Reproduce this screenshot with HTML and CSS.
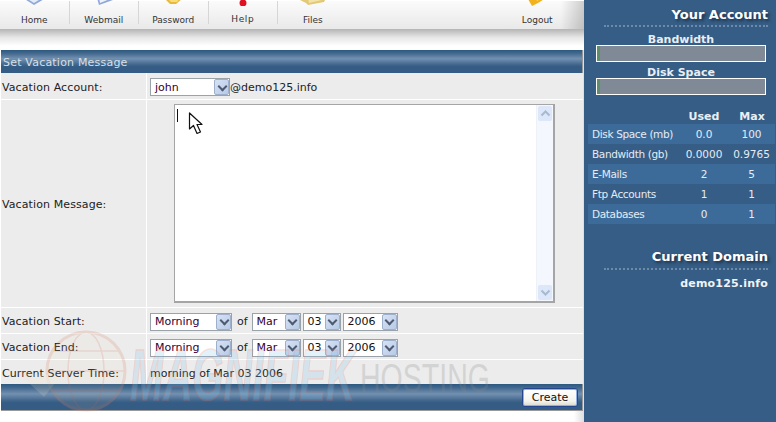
FILE: index.html
```html
<!DOCTYPE html>
<html lang="en">
<head>
    <meta charset="UTF-8">
    <meta name="viewport" content="width=device-width, initial-scale=1.0">
    <title>Set Vacation Message</title>
    <link rel="stylesheet" href="styles.css">
</head>
<body>
    <div class="main">
        <div class="nav">
            <div class="nav-item">
                <svg class="nav-icon" width="30" height="8" viewBox="0 0 30 8"><path d="M4 0 L15 7 L27 0 Z" fill="#8fa8d8"/><path d="M7 0 L15 5 L23 0 Z" fill="#e4ecf8"/></svg>
                <span>Home</span>
            </div>
            <div class="nav-item">
                <svg class="nav-icon" width="30" height="8" viewBox="0 0 30 8"><path d="M8 0 L10 7 L24 2 L24 0 Z" fill="#8fa8d8"/><path d="M10 0 L11 5 L21 1 L21 0 Z" fill="#eef2fa"/></svg>
                <span>Webmail</span>
            </div>
            <div class="nav-item">
                <svg class="nav-icon" width="30" height="8" viewBox="0 0 30 8"><path d="M6 0 L12 6 L18 6 L25 0 Z" fill="#e8b93a"/><path d="M9 0 L13 4 L19 4 L22 0 Z" fill="#f8dd78"/></svg>
                <span>Password</span>
            </div>
            <div class="nav-item">
                <svg class="nav-icon" width="30" height="8" viewBox="0 0 30 8"><circle cx="15" cy="5" r="3.5" fill="#e01020"/></svg>
                <span class="spaced">Help</span>
            </div>
            <div class="nav-item nav-files">
                <svg class="nav-icon" width="30" height="8" viewBox="0 0 30 8"><path d="M2 2 L8 5 L10 7 L26 4 L28 0 L4 0 Z" fill="#e2c877"/><path d="M10 0 L11 5 L24 2 L24 0 Z" fill="#f3e3a6"/></svg>
                <span>Files</span>
            </div>
            <div class="nav-item nav-logout">
                <svg class="nav-icon" width="30" height="8" viewBox="0 0 30 8"><path d="M6 1 L10 8 L16 5 L24 0 L6 0 Z" fill="#f2b21e"/><path d="M14 0 L15 3 L20 0 Z" fill="#fbe07a"/></svg>
                <span>Logout</span>
            </div>
        </div>
        <div class="nav-shadow"></div>

        <div class="panel">
            <div class="bar bar-title">Set Vacation Message</div>

            <div class="row row-account">
                <div class="label">Vacation Account:</div>
                <div class="field">
                    <div class="select select-account"><span>john</span><i class="arrow"></i></div>
                    <span class="domain">@demo125.info</span>
                </div>
            </div>

            <div class="row row-message">
                <div class="label">Vacation Message:</div>
                <div class="field field-message">
                    <div class="textarea">
                        <div class="text-area"><div class="caret"></div></div>
                        <div class="scrollbar">
                            <div class="scroll-btn"><svg width="11" height="7" viewBox="0 0 11 7"><path d="M1.5 5.5 L5.5 1.5 L9.5 5.5" fill="none" stroke="#a9b9cf" stroke-width="2"/></svg></div>
                            <div class="scroll-btn"><svg width="11" height="7" viewBox="0 0 11 7"><path d="M1.5 1.5 L5.5 5.5 L9.5 1.5" fill="none" stroke="#a9b9cf" stroke-width="2"/></svg></div>
                        </div>
                    </div>
                </div>
            </div>

            <div class="row row-date">
                <div class="label">Vacation Start:</div>
                <div class="field">
                    <div class="select select-time"><span>Morning</span><i class="arrow"></i></div>
                    <span class="of">of</span>
                    <div class="select select-month"><span>Mar</span><i class="arrow"></i></div>
                    <div class="select select-day"><span>03</span><i class="arrow"></i></div>
                    <div class="select select-year"><span>2006</span><i class="arrow"></i></div>
                </div>
            </div>

            <div class="row row-date">
                <div class="label">Vacation End:</div>
                <div class="field">
                    <div class="select select-time"><span>Morning</span><i class="arrow"></i></div>
                    <span class="of">of</span>
                    <div class="select select-month"><span>Mar</span><i class="arrow"></i></div>
                    <div class="select select-day"><span>03</span><i class="arrow"></i></div>
                    <div class="select select-year"><span>2006</span><i class="arrow"></i></div>
                </div>
            </div>

            <div class="row row-time">
                <div class="label">Current Server Time:</div>
                <div class="field">morning of Mar 03 2006</div>
            </div>

            <div class="bar bar-foot">
                <div class="btn">Create</div>
            </div>
        </div>

        <svg class="watermark" width="500" height="80" viewBox="0 0 500 80">
            <circle cx="86" cy="38" r="39" fill="#f6d9c0" fill-opacity="0.4" stroke="#d98a70" stroke-width="3"/>
            <ellipse cx="86" cy="38" rx="18" ry="39" fill="none" stroke="#d98a70" stroke-width="1.5"/>
            <path d="M47 38 H125 M53 18 H119 M53 58 H119" fill="none" stroke="#d98a70" stroke-width="1.5"/>
            <path d="M16 38 L60 44 L44 64 Z" fill="#f3e3c0" fill-opacity="0.7"/>
            <text x="130" y="67" class="wm-big" textLength="225" lengthAdjust="spacingAndGlyphs">MAGNIFIEK</text>
            <text x="360" y="59" class="wm-small" textLength="130" lengthAdjust="spacingAndGlyphs">HOSTING</text>
        </svg>

        <svg class="pointer" width="16" height="24" viewBox="0 0 16 24">
            <path d="M1.5 1 L1.5 17 L5.5 13.5 L9 21.5 L12.5 20 L9 12.5 L14 12.5 Z" fill="#fff" stroke="#111" stroke-width="1.2" stroke-linejoin="round"/>
        </svg>
    </div>

    <div class="side">
        <div class="side-title">Your Account</div>
        <div class="side-rule"></div>
        <div class="meter-label">Bandwidth</div>
        <div class="meter"><div class="meter-fill"></div></div>
        <div class="meter-label">Disk Space</div>
        <div class="meter"><div class="meter-fill"></div></div>

        <div class="stats-head"><span>Used</span><span>Max</span></div>
        <div class="stats">
            <div class="stat"><span>Disk Space (mb)</span><span>0.0</span><span>100</span></div>
            <div class="stat"><span>Bandwidth (gb)</span><span>0.0000</span><span>0.9765</span></div>
            <div class="stat"><span>E-Mails</span><span>2</span><span>5</span></div>
            <div class="stat"><span>Ftp Accounts</span><span>1</span><span>1</span></div>
            <div class="stat"><span>Databases</span><span>0</span><span>1</span></div>
        </div>

        <div class="side-title side-title-domain">Current Domain</div>
        <div class="side-rule"></div>
        <div class="side-domain">demo125.info</div>
    </div>
</body>
</html>
```

FILE: styles.css
```css
* {
    margin: 0;
    padding: 0;
    box-sizing: border-box;
}

body {
    font-family: 'DejaVu Sans', Verdana, sans-serif;
    font-size: 11px;
    color: #222;
    background: #fff;
    width: 776px;
    height: 422px;
    overflow: hidden;
    display: flex;
}

.main {
    width: 584px;
    position: relative;
    background: linear-gradient(90deg, #fff 0, #fff 574px, #ddd 584px);
}

/* top nav */
.nav {
    height: 29px;
    display: flex;
    background: linear-gradient(90deg, rgba(0,0,0,0) 96%, rgba(0,0,0,0.18) 100%), linear-gradient(180deg, #fbfbfb 0%, #e9e9e9 100%);
    border-top: 1px solid #fff;
}

.nav-item {
    width: 69.5px;
    height: 23px;
    display: flex;
    flex-direction: column;
    align-items: center;
    border-right: 1px solid #d6d6d6;
    font-size: 9px;
    color: #333;
}

.nav-item span {
    margin-top: 9px;
}

.nav-item .spaced {
    letter-spacing: 0.6px;
    margin-top: 8px;
}

.nav-icon {
    flex: none;
    height: 8px;
    margin-top: -3px;
}

.nav-files {
    border-right: 0;
}

.nav-logout {
    border-right: 0;
    margin-left: auto;
    margin-right: 12px;
}

.nav-shadow {
    height: 21px;
    background: linear-gradient(180deg, #b4b4b4 0%, #e6e6e6 40%, #fff 80%);
}

/* form panel */
.panel {
    margin: 0 1px 0 1px;
}

.bar {
    background: linear-gradient(180deg, #2c587f 0%, #44698f 15%, #7391b0 38%, #44698f 62%, #355c84 72%, #355c84 100%);
    border-right: 1px solid #999;
}

.bar-title {
    height: 23px;
    line-height: 25px;
    padding-left: 2px;
    color: #d5e0ea;
    font-size: 11px;
    letter-spacing: 0.2px;
}

.bar-foot {
    height: 27px;
    display: flex;
    justify-content: flex-end;
    align-items: center;
    padding-right: 4px;
    border-bottom: 1px solid #999;
}

.row {
    display: grid;
    grid-template-columns: 145px 1fr;
    column-gap: 1px;
    border-bottom: 1px solid #fff;
}

.row-account { height: 27px; }
.row-message { height: 208px; }
.row-date { height: 26px; }
.row-time { height: 24px; border-bottom: 0; }

.label,
.field {
    background: #ececec;
    display: flex;
    align-items: center;
    padding-top: 2px;
}

.label {
    padding-left: 1px;
    letter-spacing: 0.1px;
}

.field {
    padding-left: 3px;
}

.field-message {
    padding-left: 27px;
    padding-top: 0;
}

.domain {
    color: #222;
}

.of {
    margin: 0 4px 0 5px;
}

/* xp style select boxes */
.select {
    height: 18px;
    border: 1px solid #9aa2aa;
    background: #fff;
    display: flex;
    align-items: center;
    color: #303;
    padding-left: 4px;
    margin-right: 2px;
}

.select span {
    flex: 1;
}

.select-account { width: 80px; margin-right: 0; }
.select-time { width: 82px; margin-right: 0; }
.select-month { width: 49px; }
.select-day { width: 38px; }
.select-year { width: 55px; margin-right: 0; }

.select-day,
.select-year {
    color: #111;
}

.arrow {
    flex: none;
    width: 15px;
    height: 16px;
    background: linear-gradient(135deg, #d6e2f5, #b8cae6);
    border: 1px solid #9eb0cc;
    border-radius: 2px;
    position: relative;
}

.arrow::after {
    content: '';
    position: absolute;
    left: 3.5px;
    top: 2.5px;
    width: 5px;
    height: 5px;
    border-right: 2px solid #4d5a70;
    border-bottom: 2px solid #4d5a70;
    transform: rotate(45deg);
}

/* message box */
.textarea {
    width: 381px;
    height: 199px;
    border: 1px solid #a5a5a5;
    border-right-width: 2px;
    border-bottom-width: 2px;
    background: #fff;
    display: flex;
}

.text-area {
    flex: 1;
    padding: 4px 0 0 2px;
}

.caret {
    width: 1px;
    height: 13px;
    background: #111;
}

.scrollbar {
    width: 17px;
    background: #f4f7fd;
    border-left: 1px solid #eef1f8;
    display: flex;
    flex-direction: column;
    justify-content: space-between;
}

.scroll-btn {
    height: 15px;
    margin: 1px;
    background: #dce7f9;
    border-radius: 2px;
    display: flex;
    align-items: center;
    justify-content: center;
}

.btn {
    width: 56px;
    height: 19px;
    line-height: 17px;
    text-align: center;
    color: #111;
    border: 1px solid #24468f;
    border-radius: 3px;
    box-shadow: inset 0 0 0 1px #8fb0e4;
    background: linear-gradient(180deg, #fff 0%, #f4f4ee 70%, #d8d8cc 100%);
}

/* logo across the bottom of the form, very faint */
.watermark {
    position: absolute;
    left: 0;
    top: 333px;
    opacity: 0.24;
    overflow: visible;
    pointer-events: none;
}

.wm-big {
    font-family: 'Liberation Sans', sans-serif;
    font-size: 72px;
    font-weight: bold;
    font-style: italic;
    fill: #8cc6ea;
    stroke: #e0786e;
    stroke-width: 1.5;
}

.wm-small {
    font-family: 'Liberation Sans', sans-serif;
    font-size: 40px;
    fill: #888;
}

.pointer {
    position: absolute;
    left: 188px;
    top: 112px;
}

/* right column */
.side {
    width: 192px;
    background: #365d85;
    color: #fff;
    padding-top: 7px;
    display: flex;
    flex-direction: column;
}

.side-title {
    font-size: 13px;
    font-weight: bold;
    text-align: right;
    padding-right: 8px;
    height: 17px;
    line-height: 16px;
    text-shadow: 2px 2px 3px #1c3045;
}

.side-title-domain {
    margin-top: 25px;
    height: 18px;
}

.side-rule {
    margin: 1px 8px 0 20px;
    border-top: 2px dotted #6d8aa8;
    height: 6px;
}

.meter-label {
    font-size: 11px;
    font-weight: bold;
    text-align: center;
    height: 14px;
    line-height: 18px;
    color: #e8eef5;
    padding-left: 2px;
}

.meter {
    margin: 0 10px 2px 12px;
    height: 17px;
    background: #7f8a96;
    border: 1px solid #fff;
}

.meter-fill {
    width: 3px;
    height: 100%;
    background: #5f8f6a;
}

.stats-head {
    margin-top: 9px;
    height: 18px;
    line-height: 21px;
    display: grid;
    grid-template-columns: 92px 48px 48px;
    font-weight: bold;
    margin-left: 4px;
    text-align: center;
    color: #e8eef5;
}

.stats-head span:first-child {
    grid-column: 2;
}

.stats {
    margin: 0 1px 0 4px;
}

.stat {
    height: 20px;
    display: grid;
    grid-template-columns: 92px 48px 47px;
    align-items: center;
    text-align: center;
    font-size: 10.5px;
    color: #e4ecf4;
}

.stat:nth-child(odd) {
    background: #3c6b9a;
}

.stat span:first-child {
    text-align: left;
    padding-left: 4px;
    letter-spacing: -0.35px;
    white-space: nowrap;
}

.side-domain {
    font-weight: bold;
    text-align: right;
    padding-right: 8px;
    margin-top: 3px;
    letter-spacing: 0.2px;
    color: #f0f4f8;
}
```
